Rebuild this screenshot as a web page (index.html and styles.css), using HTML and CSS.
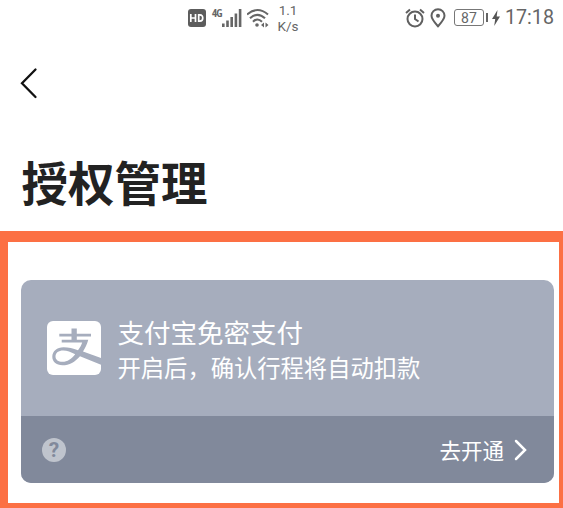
FILE: index.html
```html
<!DOCTYPE html>
<html lang="zh-CN">
<head>
    <meta charset="UTF-8">
    <meta name="viewport" content="width=device-width, initial-scale=1.0">
    <title>授权管理</title>
    <link rel="stylesheet" href="styles.css">
</head>
<body>
    <header class="status-bar">
        <div class="status-left">
            <svg class="hd" width="18" height="18" viewBox="0 0 18 18">
                <rect width="18" height="18" rx="3" fill="#5c5c5c"/>
                <path d="M2.800 5v8M7.500 5v8M2.800 9H7.500M10.700 5.800v6.400h1.200c3.800 0 3.800-6.400 0-6.400z" fill="none" stroke="#fff" stroke-width="1.700"/>
            </svg>
            <span class="network">4G</span>
            <svg class="signal" width="20" height="18" viewBox="0 0 20 18" fill="#666">
                <rect x="0" y="14.500" width="2.600" height="3.500"/>
                <rect x="4.200" y="11.500" width="2.600" height="6.500"/>
                <rect x="8.400" y="8" width="2.600" height="10"/>
                <rect x="12.600" y="4.500" width="2.600" height="13.500"/>
                <rect x="16.800" y="0" width="2.600" height="18"/>
            </svg>
            <svg class="wifi" width="24" height="20" viewBox="0 0 24 20">
                <g fill="none" stroke="#666" stroke-width="2.100">
                    <path d="M0 6.500Q10.500-2.500 21 6.500"/>
                    <path d="M3 10.300Q10.500 3.300 18 10.300"/>
                    <path d="M6 13.700Q10.500 9.300 15 13.700"/>
                </g>
                <circle cx="10" cy="17" r="1.800" fill="#666"/>
                <path d="M17 14.500v5l-3-2.500zM18.500 14.500v5l3-2.500z" fill="#666"/>
            </svg>
            <div class="speed"><span>1.1</span><span>K/s</span></div>
        </div>
        <div class="status-right">
            <svg class="alarm" width="20" height="20" viewBox="0 0 20 20" fill="none" stroke="#606060" stroke-width="2">
                <circle cx="10" cy="11" r="7.500"/>
                <path d="M10 6.500V11l3.500 2.500M1 5l4-3.500M19 5l-4-3.500"/>
            </svg>
            <svg class="pin" width="16" height="20" viewBox="0 0 16 20">
                <path d="M8 18.300C4 13.800 1.500 11 1.500 7.700a6.500 6.500 0 0 1 13 0C14.500 11 12 13.800 8 18.300z" fill="none" stroke="#606060" stroke-width="2"/>
                <circle cx="8" cy="7.700" r="2" fill="#606060"/>
            </svg>
            <div class="battery">87</div>
            <svg class="bolt" width="8" height="16" viewBox="0 0 8 16">
                <path d="M5.500 0L0 9h3.200L2.200 16 8 6.500H4.700z" fill="#555"/>
            </svg>
            <span class="time">17:18</span>
        </div>
    </header>

    <nav class="nav">
        <svg width="18" height="32" viewBox="0 0 18 32">
            <path d="M15.500 2.500L2 16.300 15.500 30" fill="none" stroke="#111" stroke-width="2.300" stroke-linecap="round"/>
        </svg>
    </nav>
    <h1 class="title">授权管理</h1>

    <main class="highlight">
        <section class="card">
            <div class="card-main">
                <svg class="logo" width="54" height="54" viewBox="0 0 54 54">
                    <rect width="54" height="54" rx="6" fill="#fff"/>
                    <path d="M24.500 7.500h5.300V12.800H44v2.800H29.800V18.800h11.500c-1.300 4.500-3 8.300-5.300 11.800L54 37v6.800L33 35.200C28 41 22.300 44.300 15.500 44.300 9 44.300 5.300 40.500 5.300 35.800c0-5.500 4.700-9.500 11.200-9.500 5 0 9.500 1.200 14.500 3 2-2.700 3.300-5.100 4.200-7.800H14.700V18.800h9.800v-3.200H12.300v-2.800h12.200zM28.200 33.200c-4.500-2.100-8-3.700-12-3.700-4.700 0-7.700 2.300-7.700 6 0 3.300 2.800 5.300 7 5.300 5 0 8.800-3 12.700-7.600z" fill="#a6adbd" fill-rule="evenodd"/>
                </svg>
                <div class="card-text">
                    <h2>支付宝免密支付</h2>
                    <p>开启后，确认行程将自动扣款</p>
                </div>
            </div>
            <div class="card-footer">
                <span class="help">?</span>
                <a class="open">去开通
                    <svg width="13" height="22" viewBox="0 0 13 22">
                        <path d="M2 2l9 9-9 9" fill="none" stroke="#fff" stroke-width="2.500" stroke-linecap="round"/>
                    </svg>
                </a>
            </div>
        </section>
    </main>
</body>
</html>
```
FILE: styles.css
```css
* {
    box-sizing: border-box;
}
body {
    margin: 0;
    height: 508px;
    overflow: hidden;
    background-color: #fff;
    font-family: "Noto Sans CJK SC", sans-serif;
}
h1, h2, p {
    margin: 0;
    font-weight: normal;
}
svg {
    display: block;
    flex: none;
}
.status-bar {
    display: flex;
    justify-content: space-between;
    height: 35px;
    padding: 0 9px 0 188px;
    color: #666;
    font-family: Roboto, sans-serif;
}
.status-left, .status-right {
    display: flex;
    align-items: center;
}
.network {
    align-self: flex-start;
    width: 10px;
    margin: 7px 0 0 6px;
    font-family: "Open Sans", sans-serif;
    font-size: 11px;
    font-weight: bold;
    font-stretch: condensed;
    line-height: 11px;
    letter-spacing: -1px;
}
.wifi {
    margin-left: 5px;
}
.speed {
    display: flex;
    flex-direction: column;
    width: 22px;
    margin-left: 6px;
    font-size: 13.5px;
    line-height: 16px;
    text-align: center;
}
.pin {
    margin: 0 8px 0 5px;
}
.alarm {
    margin-left: 1px;
}
.battery {
    position: relative;
    width: 30px;
    height: 17px;
    margin-right: 8px;
    border: 1px solid #777;
    border-radius: 3px;
    font-size: 14px;
    line-height: 16px;
    text-align: center;
}
.battery::after {
    content: "";
    position: absolute;
    top: 3px;
    right: -5px;
    width: 2px;
    height: 9px;
    background-color: #666;
}
.time {
    margin-left: 5px;
    font-size: 19.7px;
    line-height: 36px;
}
.nav {
    height: 110px;
    padding: 32px 0 0 20px;
}
.title {
    height: 86px;
    padding-left: 21.5px;
    color: #222;
    font-size: 46.5px;
    font-weight: bold;
    line-height: 71px;
}
.highlight {
    height: 277px;
    padding: 38px 5px 0 13px;
    border: solid #fc7044;
    border-width: 11px 4px 5px 8px;
}
.card {
    height: 203px;
    overflow: hidden;
    border-radius: 10px;
    background-color: #a6adbd;
    color: #fff;
}
.card-main {
    display: flex;
    height: 136px;
    padding: 41px 0 0 26px;
}
.card-text {
    margin: -8px 0 0 16.5px;
}
.card-text h2 {
    font-size: 26.5px;
    line-height: 37px;
}
.card-text p {
    font-size: 23.3px;
    line-height: 34px;
}
.card-footer {
    display: flex;
    align-items: center;
    justify-content: space-between;
    height: 67px;
    padding: 0 27px 0 21px;
    background-color: #81899b;
}
.help {
    width: 24px;
    height: 24px;
    border-radius: 50%;
    background-color: #bfc4cd;
    color: #81899b;
    font-family: Roboto, sans-serif;
    font-size: 21px;
    font-weight: bold;
    line-height: 25px;
    text-align: center;
}
.open {
    display: flex;
    align-items: center;
    gap: 10px;
    font-size: 21.5px;
    line-height: 30px;
}
```
